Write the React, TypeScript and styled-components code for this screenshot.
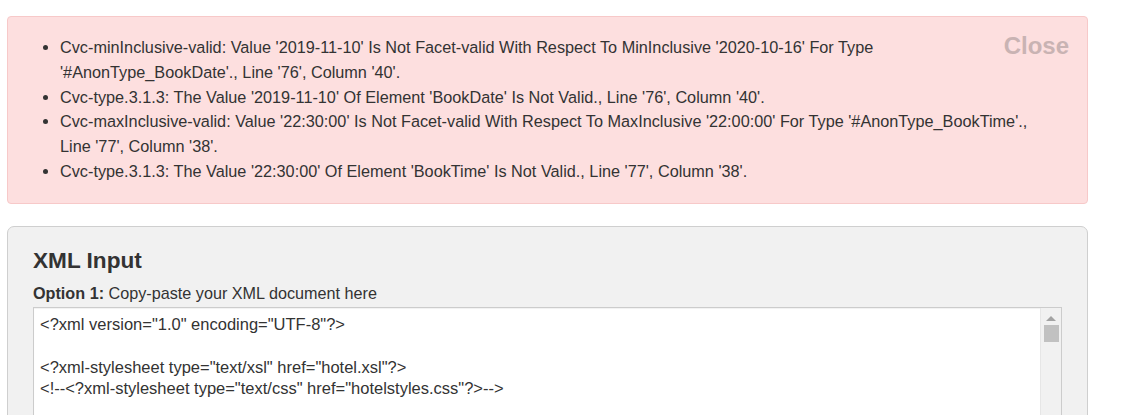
import styled, { createGlobalStyle } from "styled-components";

const GlobalStyle = createGlobalStyle`
    body {
        margin: 0;
        background: #fff;
        font-family: "Liberation Sans", Arial, sans-serif;
        color: #333;
    }
`;

const Page = styled.div`
    width: 1081px;
    padding: 16px 0 0 7px;
    display: flex;
    flex-direction: column;
    gap: 22px;
`;

const ErrorAlert = styled.div`
    position: relative;
    background: #fddfdf;
    border: 1px solid #f7c9c9;
    border-radius: 4px;
    padding: 18px 16px 19px;
`;

const CloseButton = styled.span`
    position: absolute;
    top: 17px;
    right: 18px;
    font-size: 24px;
    font-weight: bold;
    line-height: 1;
    color: #c9b3b3;
    cursor: pointer;
`;

const ErrorList = styled.ul`
    margin: 0;
    padding-left: 36px;
    font-size: 16.25px;
    line-height: 24.75px;
    color: #333;
    max-width: 985px;
`;

const Panel = styled.div`
    background: #f1f1f1;
    border: 1px solid #cfcfcf;
    border-radius: 7px;
    padding: 18px 25px 0;
    height: 200px;
`;

const PanelTitle = styled.h3`
    margin: 0 0 6px;
    font-size: 22.6px;
    font-weight: bold;
    line-height: 32px;
    color: #333;
`;

const OptionLabel = styled.div`
    font-size: 16.2px;
    line-height: 20px;
    margin-bottom: 4px;

    b {
        font-weight: bold;
    }
`;

const EditorBox = styled.div`
    display: flex;
    background: #fff;
    border: 1px solid #ccc;
    box-shadow: inset 0 1px 1px rgba(0, 0, 0, 0.06);
    height: 120px;
`;

const EditorText = styled.pre`
    flex: 1;
    margin: 0;
    padding: 6px 6px;
    font-family: "Liberation Sans", Arial, sans-serif;
    font-size: 16.5px;
    line-height: 21.5px;
    color: #333;
    white-space: pre;
    overflow: hidden;
`;

const ScrollTrack = styled.div`
    width: 20px;
    background: #f1f1f1;
    border-left: 1px solid #e6e6e6;
    display: flex;
    flex-direction: column;
    align-items: center;
`;

const Arrow = styled.div<{ $down?: boolean }>`
    width: 0;
    height: 0;
    margin-top: ${(p) => (p.$down ? "auto" : "8px")};
    margin-bottom: 4px;
    border-left: 5px solid transparent;
    border-right: 5px solid transparent;
    ${(p) =>
        p.$down
            ? "border-top: 5px solid #505050;"
            : "border-bottom: 5px solid #a3a3a3;"}
`;

const Thumb = styled.div`
    width: 15px;
    height: 17px;
    background: #c1c1c1;
`;

const errors = [
    "Cvc-minInclusive-valid: Value '2019-11-10' Is Not Facet-valid With Respect To MinInclusive '2020-10-16' For Type '#AnonType_BookDate'., Line '76', Column '40'.",
    "Cvc-type.3.1.3: The Value '2019-11-10' Of Element 'BookDate' Is Not Valid., Line '76', Column '40'.",
    "Cvc-maxInclusive-valid: Value '22:30:00' Is Not Facet-valid With Respect To MaxInclusive '22:00:00' For Type '#AnonType_BookTime'., Line '77', Column '38'.",
    "Cvc-type.3.1.3: The Value '22:30:00' Of Element 'BookTime' Is Not Valid., Line '77', Column '38'.",
];

const xmlSource = `<?xml version="1.0" encoding="UTF-8"?>

<?xml-stylesheet type="text/xsl" href="hotel.xsl"?>
<!--<?xml-stylesheet type="text/css" href="hotelstyles.css"?>-->`;

export default function App() {
    return (
        <>
            <GlobalStyle />
            <Page>
                <ErrorAlert>
                    <CloseButton>Close</CloseButton>
                    <ErrorList>
                        {errors.map((msg) => (
                            <li key={msg}>{msg}</li>
                        ))}
                    </ErrorList>
                </ErrorAlert>

                <Panel>
                    <PanelTitle>XML Input</PanelTitle>
                    <OptionLabel>
                        <b>Option 1:</b> Copy-paste your XML document here
                    </OptionLabel>
                    <EditorBox>
                        <EditorText>{xmlSource}</EditorText>
                        <ScrollTrack>
                            <Arrow />
                            <Thumb />
                            <Arrow $down />
                        </ScrollTrack>
                    </EditorBox>
                </Panel>
            </Page>
        </>
    );
}
